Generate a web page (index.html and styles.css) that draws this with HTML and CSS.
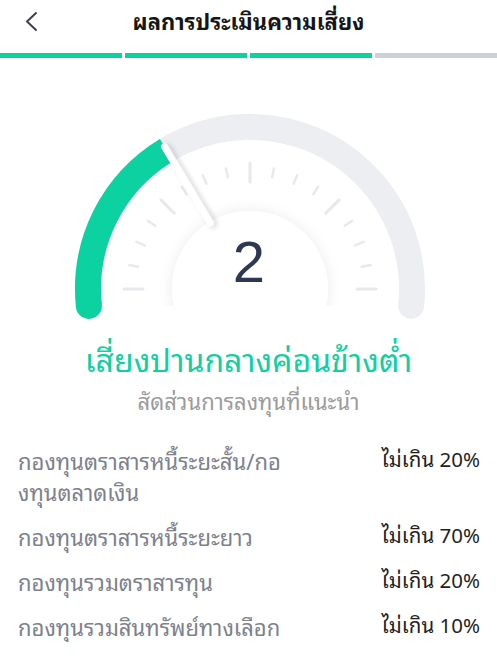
FILE: index.html
```html
<!DOCTYPE html>
<html lang="th">
<head>
<meta charset="utf-8">
<link rel="stylesheet" href="styles.css">
</head>
<body>
<div class="screen">
  <header class="topbar">
    <svg class="back" width="20" height="24" viewBox="0 0 20 24"><path d="M13 4 L4 12.5 L13 21" fill="none" stroke="#3a4252" stroke-width="2" stroke-linecap="round" stroke-linejoin="round"/></svg>
    <h1 class="title">ผลการประเมินความเสี่ยง</h1>
  </header>
  <div class="steps">
    <span class="step done"></span>
    <span class="step done"></span>
    <span class="step done"></span>
    <span class="step"></span>
  </div>
  <svg class="gauge" width="497" height="262" viewBox="0 58 497 262">
    <defs>
      <filter id="soft" x="-30%" y="-30%" width="160%" height="160%">
        <feDropShadow dx="0" dy="0" stdDeviation="7" flood-color="#1c2840" flood-opacity="0.08"/>
      </filter>
      <filter id="nshadow" x="-50%" y="-50%" width="200%" height="200%">
        <feDropShadow dx="3" dy="1" stdDeviation="2.5" flood-color="#1c2840" flood-opacity="0.18"/>
      </filter>
      <clipPath id="cut"><rect x="0" y="58" width="497" height="248"/></clipPath>
    </defs>
    <path d="M88.9 305.9 A162 162 0 1 1 411.1 305.9" fill="none" stroke="#eceef1" stroke-width="26" stroke-linecap="round"/>
    <path d="M88.9 305.9 A162 162 0 0 1 166.6 150.1" fill="none" stroke="#0cd2a2" stroke-width="26"/>
    <circle cx="88.9" cy="305.9" r="13" fill="#0cd2a2"/>
    <g id="ticks" stroke="#e7e9ed" stroke-linecap="round"></g>
    <g clip-path="url(#cut)">
      <circle cx="250" cy="289" r="78" fill="#fff" filter="url(#soft)"/>
    </g>
    <line x1="164.5" y1="146.7" x2="210.3" y2="223" stroke="#fff" stroke-width="7" stroke-linecap="round" filter="url(#nshadow)"/>
    <text x="249" y="282" text-anchor="middle" class="score">2</text>
  </svg>
  <h2 class="level">เสี่ยงปานกลางค่อนข้างต่ำ</h2>
  <p class="sub">สัดส่วนการลงทุนที่แนะนำ</p>
  <ul class="alloc">
    <li class="row"><span class="name">กองทุนตราสารหนี้ระยะสั้น/กอ<br>งทุนตลาดเงิน</span><span class="pct">ไม่เกิน 20%</span></li>
    <li class="row"><span class="name">กองทุนตราสารหนี้ระยะยาว</span><span class="pct">ไม่เกิน 70%</span></li>
    <li class="row"><span class="name">กองทุนรวมตราสารทุน</span><span class="pct">ไม่เกิน 20%</span></li>
    <li class="row"><span class="name">กองทุนรวมสินทรัพย์ทางเลือก</span><span class="pct">ไม่เกิน 10%</span></li>
  </ul>
</div>
<script>
(function () {
  var g = document.getElementById('ticks');
  var ns = 'http://www.w3.org/2000/svg';
  for (var k = 0; k <= 16; k++) {
    var a = Math.PI - k * Math.PI / 16;
    var major = k % 4 === 0;
    var r1 = major ? 107 : 114, r2 = major ? 126 : 123;
    var l = document.createElementNS(ns, 'line');
    l.setAttribute('x1', (250 + r1 * Math.cos(a)).toFixed(1));
    l.setAttribute('y1', (289 - r1 * Math.sin(a)).toFixed(1));
    l.setAttribute('x2', (250 + r2 * Math.cos(a)).toFixed(1));
    l.setAttribute('y2', (289 - r2 * Math.sin(a)).toFixed(1));
    l.setAttribute('stroke-width', major ? '3' : '2.5');
    g.appendChild(l);
  }
})();
</script>
</body>
</html>
```
FILE: styles.css
```css
* { box-sizing: border-box; }
body {
  margin: 0;
  background: #fff;
  font-family: "Noto Sans Thai Looped", "Noto Serif Thai", "Loma", "Garuda", "Sarabun", "Tahoma", "Noto Sans Thai", "Noto Sans", sans-serif;
}
.screen { width: 497px; }
.topbar {
  height: 53px;
  display: flex;
  align-items: center;
  justify-content: center;
  position: relative;
}
.back { position: absolute; left: 23px; top: 9px; }
.title {
  margin: 0 0 13px;
  font-size: 22px;
  font-weight: 700;
  color: #161616;
  line-height: 30px;
}
.steps { display: flex; gap: 3px; height: 5px; }
.step { flex: 1; background: #cdd1dc; }
.step.done { background: #0cd2a2; }
.gauge { display: block; }
.score {
  font-family: "Liberation Sans", Arial, sans-serif;
  font-size: 58px;
  fill: #2e3852;
}
.level {
  margin: 16px 0 0;
  text-align: center;
  font-size: 32px;
  font-weight: 400;
  color: #12cfa2;
  line-height: 44px;
}
.sub {
  margin: 4px 0 0;
  text-align: center;
  font-size: 22px;
  color: #9b9b9b;
  line-height: 32px;
}
.alloc {
  list-style: none;
  margin: 29px 0 0;
  padding: 0 17px 0 18px;
  display: flex;
  flex-direction: column;
  gap: 14px;
}
.row {
  display: flex;
  justify-content: space-between;
  align-items: flex-start;
}
.name {
  font-size: 22px;
  line-height: 31px;
  color: #7c818d;
}
.pct {
  font-size: 20.5px;
  line-height: 26px;
  color: #1f1f1f;
  white-space: nowrap;
}
```
